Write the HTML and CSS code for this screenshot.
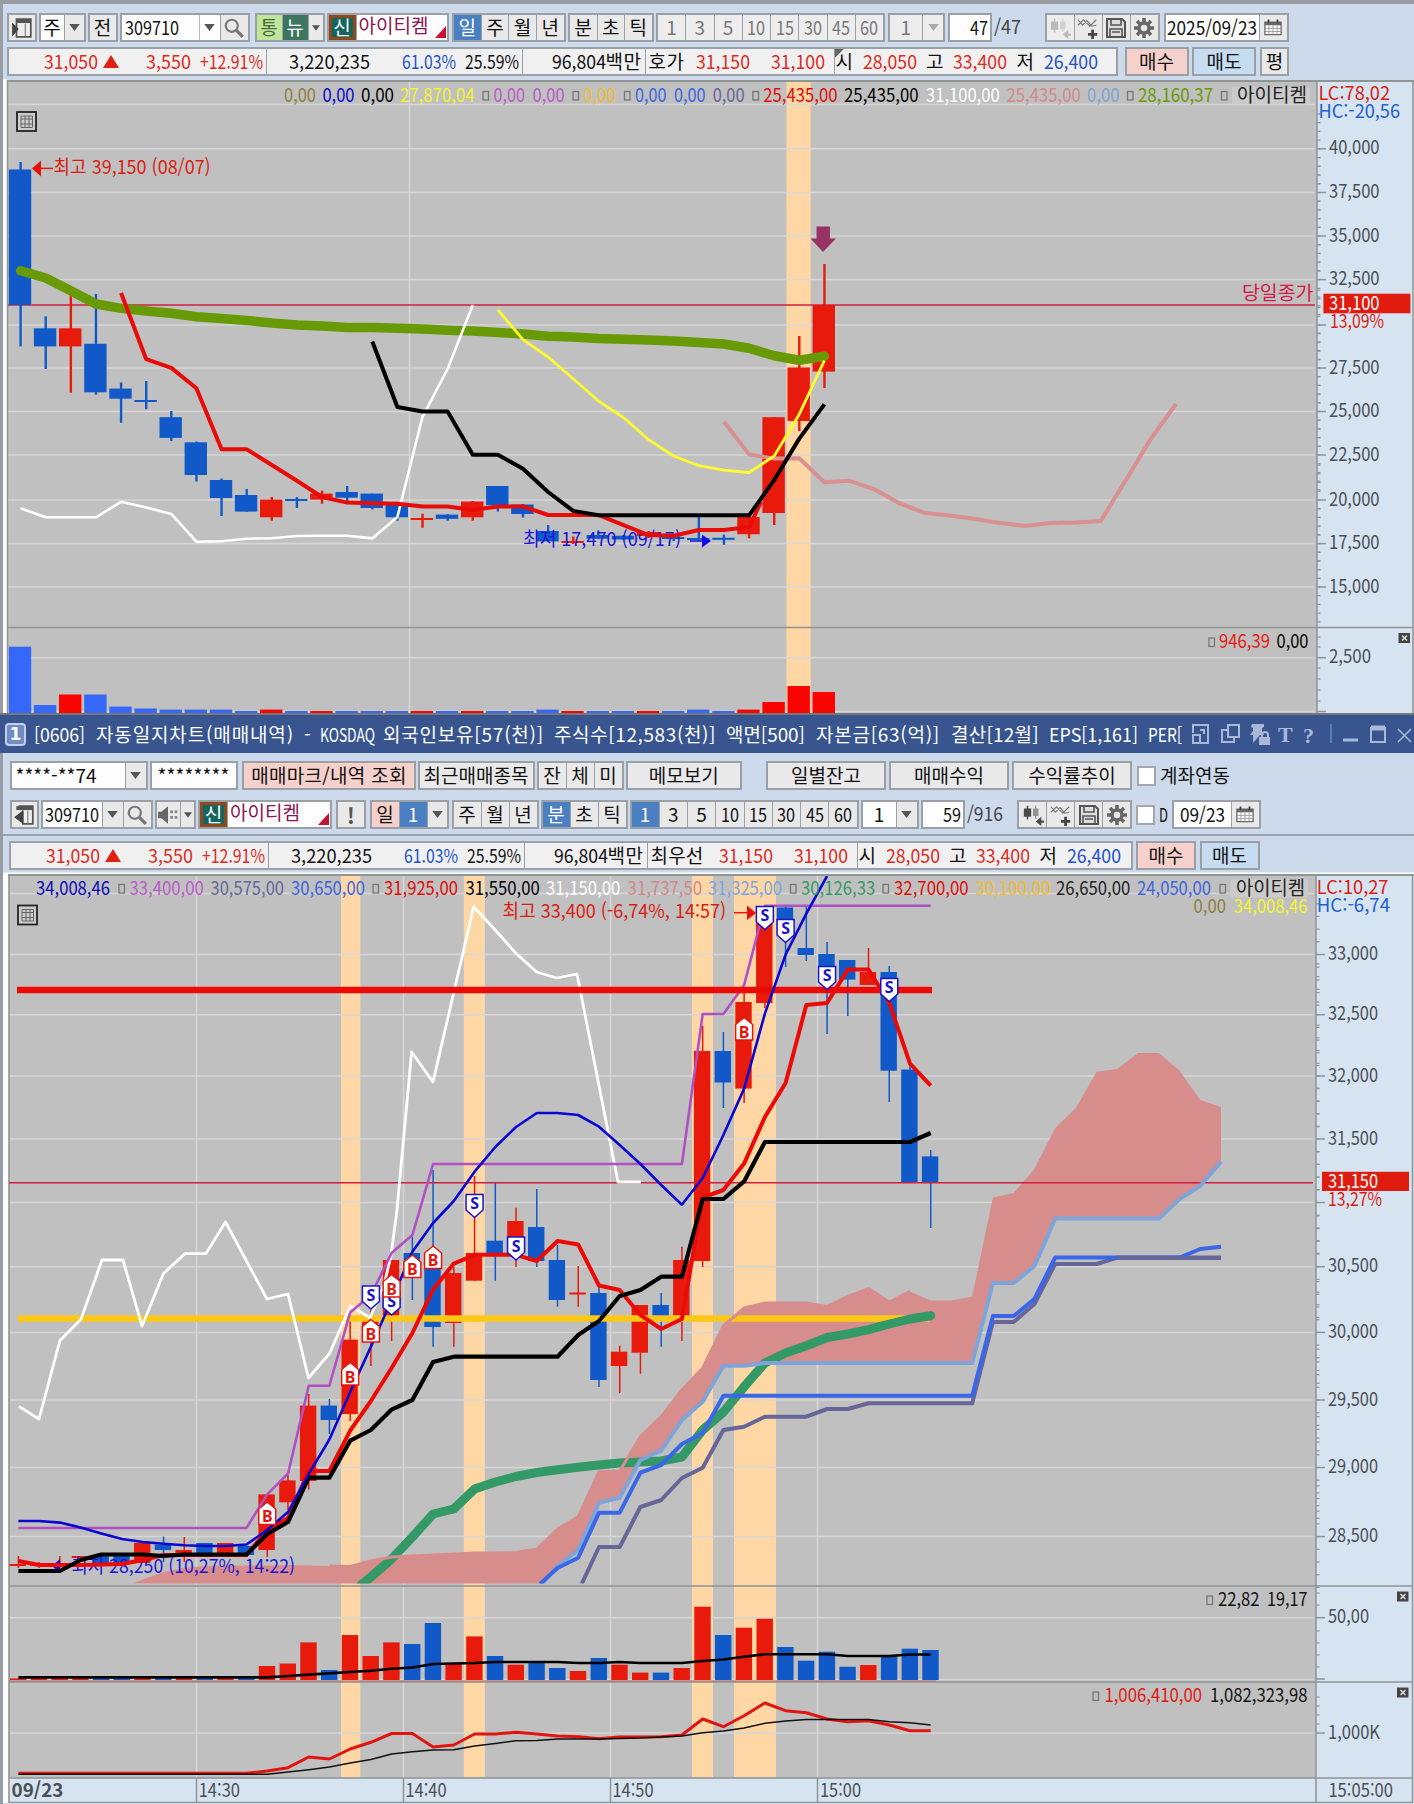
FILE: index.html
```html
<!DOCTYPE html>
<html lang="ko">
<head>
<meta charset="utf-8">
<title>자동일지차트</title>
<link rel="stylesheet" href="styles.css">
</head>
<body>
<svg class="defs" aria-hidden="true">
  <symbol id="i-panel" viewBox="0 0 20 20"><path d="M5 2h13v16H5z" fill="#eee" stroke="#555" stroke-width="1.6"/><path d="M5 2h13v3.500H5z" fill="#555"/><path d="M13 6v12" stroke="#777" fill="none"/><path d="M1 5l6 6-6 7z" fill="#444"/></symbol>
  <symbol id="i-panel-l" viewBox="0 0 20 20"><path d="M5 2h13v16H9V6" fill="#eee" stroke="#555" stroke-width="1.6"/><path d="M3 2h15v3.500H3z" fill="#555"/><path d="M13.500 6v12" stroke="#777" fill="none"/><path d="M9 6v12l-8-6z" fill="#444"/></symbol>
  <symbol id="i-search" viewBox="0 0 20 20"><circle cx="8" cy="8" r="5.500" fill="none" stroke="#777" stroke-width="2"/><path d="M12 12l6 6" stroke="#777" stroke-width="3"/></symbol>
  <symbol id="i-down" viewBox="0 0 12 8"><path d="M0 0h12l-6 8z" fill="currentColor"/></symbol>
  <symbol id="i-candle" viewBox="0 0 24 24"><path d="M2 5h8v9H2zM5.200 2h1.600v15H5.200z" fill="currentColor"/><path d="M12 5h6v8h-6zM14.300 2h1.400v14h-1.400z" fill="currentColor" opacity=".55"/><path d="M24 18h-3v-4l-6 5 6 5v-3.500h3z" fill="currentColor"/></symbol>
  <symbol id="i-wave" viewBox="0 0 24 24"><path d="M1 9l6-6 7 7 7-7M1 3l5 6 5-5 5 6 5-1" fill="none" stroke="#777" stroke-width="1.200"/><path d="M17 14v10M12 19h10" stroke="#444" stroke-width="3"/></symbol>
  <symbol id="i-save" viewBox="0 0 22 22"><path d="M2 2h15l3 3v15H2z" fill="#ddd" stroke="#555" stroke-width="2"/><path d="M6 2v6h10V2M5 20v-8h12v8M7 15h8" fill="none" stroke="#555" stroke-width="1.600"/></symbol>
  <symbol id="i-gear" viewBox="0 0 22 22"><circle cx="11" cy="11" r="5" fill="none" stroke="#666" stroke-width="3.500"/><g stroke="#666" stroke-width="3.500"><path d="M11 1v4M11 17v4M1 11h4M17 11h4M4 4l3 3M15 15l3 3M4 18l3-3M15 7l3-3"/></g></symbol>
  <symbol id="i-cal" viewBox="0 0 20 18"><path d="M1 3h18v14H1z" fill="#fff" stroke="#666" stroke-width="1.400"/><path d="M1 3h18v3.500H1z" fill="#666"/><path d="M5 0v4M15 0v4" stroke="#444" stroke-width="2"/><path d="M1 10h18M1 13.500h18M5.500 6v11M10 6v11M14.500 6v11" stroke="#999"/></symbol>
  <symbol id="i-speaker" viewBox="0 0 20 20"><path d="M1 7h3l6-5v16l-6-5H1z" fill="#666"/><path d="M12 6h2.500v2.500H12zM16 6h2.500v2.500H16zM12 11h2.500v2.500H12zM16 11h2.500v2.500H16z" fill="#888"/></symbol>
</svg>

<main class="screen">
  <section class="win win-a">
    <header class="bar bar-a">
      <div class="grp g-icon"><span class="c"><svg class="ic"><use href="#i-panel"/></svg></span></div>
      <div class="grp g-cycle"><span class="c w">주</span><span class="c dd"><svg class="dn"><use href="#i-down"/></svg></span></div>
      <div class="grp g-prev"><span class="c">전</span></div>
      <div class="grp g-code"><span class="c w txt"><span class="fit n6">309710</span></span><span class="c w dd"><svg class="dn"><use href="#i-down"/></svg></span><span class="c"><svg class="ic"><use href="#i-search"/></svg></span></div>
      <div class="grp g-news"><span class="c lime">통</span><span class="c nu">뉴</span><span class="c dd"><svg class="dn sm"><use href="#i-down"/></svg></span></div>
      <div class="grp g-name"><span class="c sin">신</span><span class="c w nm">아이티켐</span></div>
      <div class="grp g-four"><span class="c on">일</span><span class="c">주</span><span class="c">월</span><span class="c">년</span></div>
      <div class="grp g-three"><span class="c">분</span><span class="c">초</span><span class="c">틱</span></div>
      <div class="grp g-eight dim"><span class="c">1</span><span class="c">3</span><span class="c">5</span><span class="c"><span class="fit n2">10</span></span><span class="c"><span class="fit n2">15</span></span><span class="c"><span class="fit n2">30</span></span><span class="c"><span class="fit n2">45</span></span><span class="c"><span class="fit n2">60</span></span></div>
      <div class="grp g-one dim"><span class="c">1</span><span class="c dd"><svg class="dn"><use href="#i-down"/></svg></span></div>
      <div class="grp g-cnt"><span class="c w end"><span class="fit n2">47</span></span></div>
      <span class="total"><span class="fit n3">/47</span></span>
      <div class="grp g-tools"><span class="c faint"><svg class="ic"><use href="#i-candle"/></svg></span><span class="c"><svg class="ic"><use href="#i-wave"/></svg></span><span class="c"><svg class="ic"><use href="#i-save"/></svg></span><span class="c"><svg class="ic"><use href="#i-gear"/></svg></span></div>
      <div class="grp g-date"><span class="c w"><span class="fit n10">2025/09/23</span></span><span class="c"><svg class="ic cal"><use href="#i-cal"/></svg></span></div>
    </header>
    <div class="quote quote-a">
      <div class="strip">
        <div class="q q1"><b class="fit n6 red">31,050</b><i class="tri"></i><b class="fit n5 red">3,550</b><b class="fit n7 red">+12.91%</b></div>
        <div class="q q2"><b class="fit n9">3,220,235</b><b class="fit n6 blue">61.03%</b><b class="fit n6">25.59%</b></div>
        <div class="q q3"><b class="fit n6">96,804</b><b class="fit k2">백만</b></div>
        <div class="q q4"><b class="fit k2">호가</b><b class="fit n6 red">31,150</b><b class="fit n6 red">31,100</b></div>
        <div class="q q5 notch"><b class="k1">시</b><b class="fit n6 red">28,050</b><b class="k1">고</b><b class="fit n6 red">33,400</b><b class="k1">저</b><b class="fit n6 blue">26,400</b></div>
      </div>
      <button class="btn buy">매수</button><button class="btn sell">매도</button><button class="btn avg">평</button>
    </div>
    <svg id="daily" class="plot" viewBox="0 78 1414 637"></svg>
  </section>

  <section class="win win-b">
    <div class="title">
      <span class="num">1</span>
      <span class="fit t1">[0606]</span><span class="fit t2">자동일지차트(매매내역)</span><span class="fit t3">-</span><span class="fit t4">KOSDAQ</span><span class="fit t5">외국인보유[57(천)]</span><span class="fit t6">주식수[12,583(천)]</span><span class="fit t7">액면[500]</span><span class="fit t8">자본금[63(억)]</span><span class="fit t9">결산[12월]</span><span class="fit t10">EPS[1,161]</span><span class="fit t11">PER[</span>
      <svg class="winicons" viewBox="1184 715 230 38" width="230" height="38">
        <g fill="none" stroke="#a9b8d9" stroke-width="2">
          <path d="M1195 733v-8h15v18h-7M1195 735h7v8h-7zM1202 730h4v4"/>
          <path d="M1230 725h11v12h-11zM1229 730h-5v12h12v-4"/>
          <path d="M1333 724v19" stroke="#7087b8" stroke-width="1.500"/>
          <path d="M1373 728h14v14h-14z"/><path d="M1373 728h14" stroke-width="5"/>
          <path d="M1400 729l13 13M1413 729l-13 13" stroke-width="1.500"/>
          <path d="M1345 740h15" stroke-width="3"/>
          <path d="M1264 738v-3a3 3 0 0 1 6 0v3"/>
        </g>
        <path d="M1254 724h12v3l-2 1v4l2 3h-4l-7 8v-8h-3l3-4v-3l-2-1zM1261 737h11v8h-11z" fill="#a9b8d9"/>
        <text x="1280" y="742" class="serif">T</text><text x="1305" y="743" class="serif">?</text>
      </svg>
    </div>
    <div class="bar bar-b">
      <div class="grp h-acct"><span class="c w txt"><span class="fit n9">****-**74</span></span><span class="c dd"><svg class="dn"><use href="#i-down"/></svg></span></div>
      <div class="grp h-pass"><span class="c w"><span class="fit n8">********</span></span></div>
      <button class="btn h-mark">매매마크/내역 조회</button>
      <button class="btn h-recent">최근매매종목</button>
      <div class="grp h-three"><span class="c">잔</span><span class="c">체</span><span class="c">미</span></div>
      <button class="btn h-memo">메모보기</button>
      <button class="btn h-bal">일별잔고</button>
      <button class="btn h-bal">매매수익</button>
      <button class="btn h-bal">수익률추이</button>
      <i class="chk"></i><span class="lbl">계좌연동</span>
    </div>
    <div class="bar bar-c">
      <div class="grp g-icon"><span class="c"><svg class="ic"><use href="#i-panel-l"/></svg></span></div>
      <div class="grp j-code"><span class="c w"><span class="fit n6">309710</span></span><span class="c dd"><svg class="dn"><use href="#i-down"/></svg></span><span class="c"><svg class="ic"><use href="#i-search"/></svg></span></div>
      <div class="grp j-spk"><span class="c"><svg class="ic"><use href="#i-speaker"/></svg></span><span class="c dd"><svg class="dn sm"><use href="#i-down"/></svg></span></div>
      <div class="grp j-name"><span class="c sin">신</span><span class="c w nm">아이티켐</span></div>
      <div class="grp g-icon"><span class="c strong">!</span></div>
      <div class="grp j-day"><span class="c pink">일</span><span class="c on">1</span><span class="c dd"><svg class="dn"><use href="#i-down"/></svg></span></div>
      <div class="grp j-three"><span class="c">주</span><span class="c">월</span><span class="c">년</span></div>
      <div class="grp j-three"><span class="c on">분</span><span class="c">초</span><span class="c">틱</span></div>
      <div class="grp j-eight"><span class="c on">1</span><span class="c">3</span><span class="c">5</span><span class="c"><span class="fit n2">10</span></span><span class="c"><span class="fit n2">15</span></span><span class="c"><span class="fit n2">30</span></span><span class="c"><span class="fit n2">45</span></span><span class="c"><span class="fit n2">60</span></span></div>
      <div class="grp j-one"><span class="c w">1</span><span class="c dd"><svg class="dn"><use href="#i-down"/></svg></span></div>
      <div class="grp g-cnt"><span class="c w end"><span class="fit n2">59</span></span></div>
      <span class="total total-b"><span class="fit n4">/916</span></span>
      <div class="grp g-tools tools-b"><span class="c"><svg class="ic"><use href="#i-candle"/></svg></span><span class="c"><svg class="ic"><use href="#i-wave"/></svg></span><span class="c"><svg class="ic"><use href="#i-save"/></svg></span><span class="c"><svg class="ic"><use href="#i-gear"/></svg></span></div>
      <i class="chk"></i><span class="lbl d"><span class="fit n1">D</span></span>
      <div class="grp j-date"><span class="c w"><span class="fit n5">09/23</span></span><span class="c"><svg class="ic cal"><use href="#i-cal"/></svg></span></div>
    </div>
    <div class="quote quote-b">
      <div class="strip">
        <div class="q q1"><b class="fit n6 red">31,050</b><i class="tri"></i><b class="fit n5 red">3,550</b><b class="fit n7 red">+12.91%</b></div>
        <div class="q q2"><b class="fit n9">3,220,235</b><b class="fit n6 blue">61.03%</b><b class="fit n6">25.59%</b></div>
        <div class="q q3"><b class="fit n6">96,804</b><b class="fit k2">백만</b></div>
        <div class="q q4"><b class="fit k3">최우선</b><b class="fit n6 red">31,150</b><b class="fit n6 red">31,100</b></div>
        <div class="q q5"><b class="k1">시</b><b class="fit n6 red">28,050</b><b class="k1">고</b><b class="fit n6 red">33,400</b><b class="k1">저</b><b class="fit n6 blue">26,400</b></div>
      </div>
      <button class="btn buy">매수</button><button class="btn sell">매도</button>
    </div>
    <svg id="minute" class="plot" viewBox="0 870 1414 933"></svg>
  </section>
</main>
<script src="chart.js"></script>
</body>
</html>
```
FILE: styles.css
```css
* { box-sizing: border-box; }
body {
  margin: 0;
  background: #cddaeb;
  font-family: "Noto Sans CJK KR", "Liberation Sans", sans-serif;
  font-size: 19px;
  line-height: 26px;
  color: #111;
}
.defs { position: absolute; width: 0; height: 0; }
.screen { width: 1414px; height: 1804px; overflow: hidden; display: flex; flex-direction: column; }
.win { display: flex; flex-direction: column; border-left: 3px solid #989ca4; }
.win-a { height: 715px; border-top: 4px solid #989ca2; }
.win-b { height: 1089px; }
.bar { display: flex; height: 29px; }
.bar-a { margin: 9px 0 0 4px; width: 1300px; }
.bar-b { margin: 8px 0 0 6.5px; }
.bar-c { margin: 10px 0 0 6.5px; }

.grp { display: flex; border: 2px solid #9aa0a6; background: #e9e9ea; flex: none; }
.c { flex: 1 1 0; display: flex; align-items: center; justify-content: center; white-space: nowrap; min-width: 0; line-height: 22px; padding-bottom: 2px; }
.c + .c { border-left: 1.5px solid #9aa0a6; }
.w { background: #fdfdfe; }
.txt { justify-content: flex-start; padding-left: 4px; }
.end { justify-content: flex-end; padding-right: 2px; }
.on { background: #4a7fc2; color: #fff; }
.pink { background: #f6d0ca; }
.lime { background: #c0e69c; color: #4a6a3a; }
.nu { background: #3d7561; color: #fff; }
.sin { background: #136660; color: #fff; border: 3px solid #8a4a1c; flex: 0 0 27px; }
.nm { color: #8a1450; justify-content: flex-start; padding-left: 2px; padding-bottom: 6px; position: relative; }
.nm::after { content: ""; position: absolute; right: 1px; bottom: 2px; border-left: 11px solid transparent; border-bottom: 12px solid #cc0f2f; }
.dim { color: #777; background: #ededee; }
.dim .dn { color: #aaa; }
.faint { color: #bbb; background: #ededee; }
.strong { font-weight: bold; color: #555; font-size: 22px; }
.ic { width: 22px; height: 22px; color: #4a4a4a; margin-top: 2px; }
.faint .ic { color: #bbb; }
.cal { width: 18px; height: 17px; }
.dn { width: 11px; height: 7px; color: #555; margin-top: 2px; }
.sm { width: 8px; height: 6px; }

.g-icon { width: 29.5px; margin-right: 2px; }
.g-cycle { width: 47px; margin-right: 2px; }
.g-cycle .dd { flex: 0 0 20px; }
.g-prev { width: 30px; margin-right: 2px; }
.g-code { width: 130px; margin-right: 5px; }
.g-code .c + .c { flex: 0 0 21px; }
.g-code .c:last-child { flex-basis: 28px; }
.g-code .txt { padding-left: 3px; }
.g-code .dd { border-left: 1.5px solid #bbb; }
.g-news { width: 70px; margin-right: 2px; }
.g-news .dd { flex: 0 0 15px; }
.g-name { width: 122px; margin-right: 3.5px; }
.g-four { width: 113.5px; margin-right: 2.5px; }
.g-three { width: 85.5px; margin-right: 2.5px; }
.g-eight { width: 229px; margin-right: 2.5px; }
.g-one { width: 57.5px; margin-right: 2.5px; }
.g-one .dd { flex: 0 0 21px; }
.g-cnt { width: 44px; }
.total { width: 53px; padding: 0 0 0 2px; color: #444; }
.g-tools { width: 115px; margin-right: 4px; }
.g-date { width: 125px; }
.g-date .c:last-child { flex: 0 0 28px; }

.h-acct { width: 138px; margin-right: 2px; }
.h-acct .dd { flex: 0 0 21px; }
.h-pass { width: 88px; margin-right: 4.5px; }
.h-three { width: 87px; margin-right: 2px; }
.j-code { width: 111.5px; margin-right: 2px; }
.j-code .c + .c { flex: 0 0 21px; }
.j-code .c:last-child { flex-basis: 28px; }
.j-spk { width: 41.5px; margin-right: 2px; }
.j-spk .dd { flex: 0 0 14px; }
.j-name { width: 134px; margin-right: 4px; }
.j-day { width: 79px; margin: 0 3px 0 2px; }
.j-day .dd { flex: 0 0 20px; }
.j-three { width: 87px; margin-right: 2px; }
.j-eight { width: 229px; margin-right: 2px; }
.j-one { width: 58px; margin-right: 2px; }
.j-one .dd { flex: 0 0 21px; }
.total-b { width: 52.5px; }
.tools-b { margin-right: 4px; }
.j-date { width: 88.5px; }
.j-date .c:last-child { flex: 0 0 28px; }

.chk { flex: none; width: 19px; height: 20px; margin: 5px 4px 0 0; background: #fff; border: 2px solid #a4a8ae; }
.lbl { padding-top: 1px; }
.lbl.d { width: 12px; margin-right: 1px; }
.btn { flex: none; height: 29px; margin: 0; padding: 0 0 2px; border: 2px solid #9aa0a6; background: #e9e9ea; font: inherit; line-height: 23px; color: #111; white-space: nowrap; }
.h-mark { width: 174px; margin-right: 1.5px; background: #f6d0ca; letter-spacing: .3px; }
.h-recent { width: 117px; margin-right: 2px; }
.h-memo { width: 116.5px; margin-right: 24px; }
.h-bal { width: 120px; margin-right: 3px; }
.h-bal + .chk { margin-left: 2px; }

.quote { display: flex; height: 29px; }
.quote-a { margin: 5px 0 0 4px; }
.quote-b { margin: 5px 0 0 0; border-top: 2px solid #98a3b0; height: 36px; padding: 5px 0 0 6px; }
.strip { display: flex; height: 29px; width: 1111px; border: 2px solid #9aa0a6; background: #f0f0f1; margin-right: 6.5px; }
.quote-b .strip { width: 1123.5px; margin-right: 3.500px; }
.q { display: flex; align-items: center; justify-content: flex-end; flex: none; white-space: nowrap; line-height: 23px; padding-bottom: 2px; }
.q + .q { border-left: 1.500px solid #9aa0a6; }
.q b { font-weight: normal; flex: none; }
.q1 { width: 256.5px; padding-right: 3px; }
.q2 { width: 256.5px; padding-right: 3px; gap: 9px; }
.q3 { width: 122.5px; padding-right: 3px; }
.q4 { width: 189px; padding-right: 9px; gap: 21px; }
.quote-b .q4 { width: 210px; }
.quote-a .k2 { margin-right: 0; }
.quote-a .q4 .k2 { margin-right: -10px; }
.quote-b .k3 { margin-right: -6px; }
.q5 { padding-left: 1px; gap: 9.5px; justify-content: flex-start; }
.notch { background: linear-gradient(135deg, #666 6px, transparent 6.5px); }
.n1 { width: 9px; }
.n2 { width: 18px; }
.n3 { width: 27px; }
.n4 { width: 36px; }
.n5 { width: 45px; }
.n6 { width: 54px; }
.n7 { width: 63px; }
.n8 { width: 72px; }
.n9 { width: 81px; }
.n10 { width: 90px; }
.q .n5 { margin-right: 9px; }
.q .n9 { margin-right: 23px; }
.k1 { width: 17.500px; }
.k2 { width: 36px; }
.k3 { width: 53px; }
.tri { border: 8px solid transparent; border-top: 0; border-bottom: 13px solid #e02010; margin: 1px 27px 0 5px; }
.red { color: #dc2a1c; }
.blue { color: #2450cc; }
.buy { width: 64px; margin-right: 3.500px; background: #f6d0ca; }
.sell { width: 64px; margin-right: 4px; background: #c5dcf1; }
.avg { width: 29px; }
.quote-b .buy, .quote-b .sell { width: 60px; }

.title { height: 38px; background: #38558f; color: #fff; display: flex; align-items: center; margin-left: -3px; padding-left: 5px; white-space: nowrap; }
.num { width: 21px; height: 23px; border: 2px solid #c3cfe8; border-radius: 4px; background: #6f8cc4; font: bold 17px/19px "DejaVu Sans", sans-serif; text-align: center; margin-right: 8px; }
.t1 { width: 51px; margin-right: 11px; }
.t2 { width: 198px; margin-right: 10px; }
.t3 { width: 7px; margin-right: 9px; }
.t4 { width: 55px; margin-right: 8px; }
.t5 { width: 161px; margin-right: 10px; }
.t6 { width: 162px; margin-right: 10px; }
.t7 { width: 79px; margin-right: 11px; }
.t8 { width: 124px; margin-right: 11px; }
.t9 { width: 88px; margin-right: 10px; }
.t10 { width: 89px; margin-right: 10px; }
.t11 { width: 34px; }
.fit { display: block; overflow: visible; flex: none; transform-origin: 0 50%; }
.winicons { flex: none; }
.serif { font: bold 22px "Liberation Serif", serif; fill: #a9b8d9; }

.plot { display: block; flex: none; margin-left: -3px; width: 1414px; }
#daily { height: 637px; margin-top: 2px; }
#minute { height: 933px; }
.plot text { font-size: 19px; }
.plot .mark { font: bold 16px "Noto Sans", sans-serif; }
```
FILE: chart.js
```js
// Spread or condense text to the width of its cell, as a fixed-pitch terminal font does.
document.querySelectorAll('.fit').forEach(el => {
  const range = document.createRange();
  range.selectNodeContents(el);
  const natural = range.getBoundingClientRect().width;
  const room = el.clientWidth;
  if (natural > room) el.style.transform = `scaleX(${(room / natural).toFixed(4)})`;
  else el.style.letterSpacing = ((room - natural) / el.textContent.length).toFixed(2) + 'px';
});

const RED = '#e81a0c', BLUE = '#1159c8', GRID = '#d6d6d6', EDGE = '#8f9494';

function painter(id) {
  const out = [];
  const p = {
    raw: s => out.push(s),
    rect: (x, y, x2, y2, f, extra = '') => out.push(`<rect x="${x}" y="${y}" width="${(x2 - x).toFixed(1)}" height="${(y2 - y).toFixed(1)}" fill="${f}" ${extra}/>`),
    line: (x, y, x2, y2, c, w = 1.5) => out.push(`<path d="M${x} ${y}L${x2} ${y2}" stroke="${c}" stroke-width="${w}"/>`),
    text: (x, y, x2, s, c, extra = '') => out.push(`<text x="${x}" y="${y}" fill="${c}" textLength="${(x2 - x).toFixed(1)}" lengthAdjust="spacingAndGlyphs" ${extra}>${s}</text>`),
    poly: (pts, c, w, cap = 'butt') => out.push(`<path d="M${pts.map(q => q.map(v => v.toFixed(1)).join(' ')).join('L')}" fill="none" stroke="${c}" stroke-width="${w}" stroke-linejoin="round" stroke-linecap="${cap}"/>`),
    square: (x, y) => out.push(`<rect x="${x}" y="${y - 10}" width="5.5" height="8.5" fill="none" stroke="#777" stroke-width="1.3"/>`),
    close: (x, y) => out.push(`<rect x="${x}" y="${y}" width="11.500" height="10" fill="#444"/><path d="M${x + 3.5} ${y + 2.5}l5 5M${x + 8.5} ${y + 2.5}l-5 5" stroke="#ddd" stroke-width="1.5"/>`),
    table: (x, y) => out.push(`<rect x="${x}" y="${y}" width="19" height="19" fill="#ccc" stroke="#222" stroke-width="1.8"/><path d="M${x + 4} ${y + 4}h11.500v11.500h-11.500zM${x + 4} ${y + 7}h11.500M${x + 4} ${y + 12}h11.500M${x + 8} ${y + 4}v11.500M${x + 12} ${y + 4}v11.500" fill="none" stroke="#666"/>`),
    flush: () => { document.getElementById(id).innerHTML = out.join(''); }
  };
  return p;
}
const series = (x, start, ys) => ys.map((y, k) => [x(start + k), y]);
const rep = (v, n) => Array(n).fill(v);
function candles(p, x, half, rows, wick) {
  rows.forEach(([i, top, bot, hi, lo, c]) => {
    const col = c === 'R' ? RED : BLUE, cx = x(i);
    p.line(cx, hi, cx, lo, col, wick);
    p.rect((cx - half - .6).toFixed(1), top, cx + half - .6, Math.max(bot, top + 2), col);
  });
}

/* ---------- daily chart ---------- */
(function () {
  const p = painter('daily'), x = i => 20.6 + 25.12 * i;
  p.rect(0, 78, 1414, 715, '#cddaeb');
  p.rect(0, 78, 3, 715, '#989ca4');
  p.rect(3, 79, 7, 715, '#fdfdfd');
  p.rect(7, 80.5, 1414, 715, '#c0c0c0');
  p.rect(1317, 82, 1414, 715, '#d6e3f1');
  p.rect(786.5, 82, 810.7, 713, '#ffd7a4');
  const grid = [148.8, 192.5, 236, 279.6, 325, 368, 411.5, 455, 500, 543.6, 587];
  [104.5, ...grid, 657.7, 711.5].forEach(y => p.line(8, y, 1315, y, GRID));
  p.line(409.5, 82, 409.5, 713, GRID);
  p.line(7, 81, 1414, 81, EDGE, 2);
  p.line(7.5, 80, 7.5, 715, EDGE);
  p.line(7, 627.5, 1413, 627.5, EDGE);
  p.line(1317, 81, 1317, 715, EDGE);
  p.line(1413, 81, 1413, 715, EDGE);
  p.line(0, 714, 1414, 714, '#777', 2);

  ['40,000', '37,500', '35,000', '32,500', '', '27,500', '25,000', '22,500', '20,000', '17,500', '15,000'].forEach((s, k) => {
    const y = grid[k];
    p.line(1317, y, 1326, y, EDGE);
    for (let m = -4; m < 5; m++) p.line(1317, y + m * 8.72, 1320.5, y + m * 8.72, EDGE, 1.2);
    if (s) p.text(1329, y + 5.5, 1379.5, s, '#4a4e52');
  });
  [637, 647, 668, 679, 690, 701].forEach(y => p.line(1317, y, 1320.5, y, EDGE, 1.2));
  p.line(1317, 657.7, 1326, 657.7, EDGE);
  p.line(1317, 711.5, 1326, 711.5, EDGE);
  p.text(1329, 662.5, 1371, '2,500', '#4a4e52');
  p.close(1398.5, 633);

  p.line(8, 305, 1315, 305, '#d01f3f', 1.6);
  p.text(1242, 300, 1313.5, '당일종가', '#d81848');

  candles(p, x, 11.2, [
    [0, 169.5, 305, 162, 346.4, 'B'], [1, 328.3, 346.4, 316.3, 369, 'B'], [2, 328.3, 346.4, 295.6, 392.7, 'R'],
    [3, 343.8, 392.3, 294, 394.6, 'B'], [4, 388.6, 398.7, 382.5, 422.8, 'B'], [5, 400, 402, 381, 409.3, 'B'],
    [6, 417.2, 437.9, 411, 441, 'B'], [7, 442.3, 475, 441.5, 481.5, 'B'], [8, 480, 498, 478.5, 516, 'B'],
    [9, 495, 511.6, 489, 511.6, 'B'], [10, 499.6, 517.3, 497, 520.7, 'R'], [11, 499, 501, 497, 508, 'B'],
    [12, 493.6, 499.6, 490.5, 503.7, 'R'], [13, 492, 497.7, 486, 501, 'B'], [14, 493.6, 508, 493.6, 509.4, 'B'],
    [15, 503.7, 517.3, 503, 520.7, 'B'], [16, 518, 520, 513.8, 527.8, 'R'], [17, 514.6, 518.8, 514, 520.7, 'B'],
    [18, 501.5, 517.3, 501, 520.7, 'R'], [19, 486, 505.2, 486, 511.5, 'B'], [20, 504.5, 514, 504, 517.6, 'B'],
    [21, 531, 541.4, 525, 541.4, 'B'], [22, 541, 543, 536.5, 544, 'R'], [23, 535, 538.7, 530.5, 539, 'B'],
    [24, 535.7, 539.5, 535, 540, 'B'], [25, 532, 536, 531, 538, 'R'], [26, 537, 539, 534, 541, 'B'],
    [27, 538, 540, 516, 541, 'B'], [28, 537.8, 539.8, 534.6, 544.8, 'B'], [29, 517, 534.2, 517, 538.4, 'R'],
    [30, 417.2, 513, 417.2, 525, 'R'], [31, 367.5, 421, 336, 431, 'R'], [32, 305, 371.6, 264, 388, 'R']
  ], 2.4);

  const vol = [646.7, 705, 694.5, 694.5, 706.6, 708.5, 709.6, 709.6, 709.6, 711, 709.6, 711, 711, 711, 711, 711, 711, 711, 711, 711, 711, 709.6, 711, 711, 711, 711, 711, 709.6, 711, 709.6, 702, 686, 692];
  const up = [2, 10, 12, 16, 18, 22, 25, 29, 30, 31, 32];
  vol.forEach((y, i) => p.rect((x(i) - 11.8).toFixed(1), y, x(i) + 10.6, 713, up.includes(i) ? '#f90400' : '#3568f8'));

  p.text(523, 546, 681, '최저 17,470 (09/17)', '#1a14d8');
  p.line(690, 541, 704, 541, '#1a14d8');
  p.raw('<path d="M702 534.500l9 6.500-9 6.500z" fill="#1408f0"/>');
  p.text(53.6, 174, 210.7, '최고 39,150 (08/07)', '#dc1c10');
  p.line(40, 168.4, 53, 168.4, RED);
  p.raw('<path d="M41 160.500v16l-9-8z" fill="#e8100c"/>');

  p.poly(series(x, 0, [270.8, 278, 290.7, 304, 308.4, 311, 313.3, 316.7, 318.6, 320.4, 323, 325, 326, 327.6, 327.6, 328.3, 329, 330.2, 331, 332.5, 334, 336.2, 337, 338.5, 339.3, 340, 341, 342.6, 344, 348.3, 355.8, 360.3, 356.2]), '#679a04', 9.5, 'round');
  p.poly(series(x, 0, [508.2, 517.3, 517.3, 517.3, 501.8, 507.5, 513.9, 541.7, 541.2, 538.7, 538.2, 536, 535.7, 535.7, 538.4, 517, 416.8, 369, 305]), '#fff', 2.6);
  p.poly([...series(x, 4, [293, 359.2, 367.9, 388.2, 449.2, 449.2, 465, 480.8, 497, 502.6, 503.3, 503.7, 506.4, 506.4, 510, 506.4, 506.4, 515, 515, 515, 525.2, 535, 535.7, 530, 530, 527]), [761, 502]], '#e80c08', 4);
  p.poly(series(x, 28, [421.7, 454.4, 458.6, 458.2, 482.3, 480.8, 489.4, 503.4, 513, 515.4, 519, 523, 526, 523, 522.5, 521, 480, 438.6, 404]), '#d89090', 4);
  p.poly(series(x, 14, [341.5, 407, 411.5, 411.5, 454.8, 454.8, 468.7, 492, 510.9, ...rep(515.3, 7), 480, 438.6, 404.4]), '#000', 4);
  p.poly(series(x, 19, [310, 339.6, 357, 378.8, 401, 417.5, 439.7, 456, 465.7, 470.2, 472.5, 456, 414.2, 360.7]), '#fdfb30', 2.8);
  p.raw('<path d="M816.500 226.500h13.500v12h6L823 252l-12.500-13.500h6z" fill="#993366"/>');

  [['0,00', 284, 316, '#8f7f3f'], ['0,00', 322.4, 354.5, '#0808c8'], ['0,00', 361, 394, '#000'], ['27,870,04', 400, 474.5, '#f4f430'],
   ['0,00', 493.5, 525, '#b85cc8'], ['0,00', 532.5, 564.6, '#b85cc8'], ['0,00', 583, 616, '#f0bc30'], ['0,00', 635, 666.5, '#3c64e0'],
   ['0,00', 674, 705.5, '#3c64e0'], ['0,00', 712.7, 744.6, '#66669a'], ['25,435,00', 763.3, 837.5, '#e00c08'], ['25,435,00', 844, 918.6, '#000'],
   ['31,100,00', 926, 999.6, '#fff'], ['25,435,00', 1006.5, 1080.7, '#d48888'], ['0,00', 1087, 1119.4, '#7fa4d8'], ['28,160,37', 1138, 1213, '#679a04']
  ].forEach(([s, a, b, c]) => p.text(a, 101.5, b, s, c));
  [483, 573, 624.5, 753, 1127.5, 1221.5].forEach(a => p.square(a, 101.5));
  p.rect(1232, 87, 1310, 104.5, '#cbcbcb');
  p.text(1237, 101.5, 1307, '아이티켐', '#222');
  p.text(1318.5, 100, 1390, 'LC:78,02', '#dc1c10');
  p.text(1318.5, 118, 1400, 'HC:-20,56', '#2060d0');
  p.table(17, 112);
  p.square(1209, 648);
  p.text(1219, 648, 1270, '946,39', '#e81810');
  p.text(1276.5, 648, 1308.5, '0,00', '#000');
  p.rect(1323.4, 293.7, 1410.4, 313.3, '#e01c10');
  p.text(1329, 310, 1379.5, '31,100', '#fff');
  p.text(1330, 328, 1384, '13,09%', '#dc1c10');
  p.flush();
})();

/* ---------- minute chart ---------- */
(function () {
  const p = painter('minute'), x = i => 18.4 + 20.735 * i;
  p.rect(0, 870, 1414, 1804, '#cddaeb');
  p.rect(0, 870, 3, 1804, '#989ca4');
  p.rect(3, 872.5, 1414, 1804, '#fdfdfd');
  p.rect(8.5, 874, 1414, 1804, '#c0c0c0');
  p.rect(1316, 876, 1414, 1804, '#d6e3f1');
  p.rect(9, 1778, 1414, 1804, '#d6e3f1');
  [[341, 360.3], [463.8, 484.8], [692, 713], [734, 776]].forEach(([a, b]) => p.rect(a, 876, b, 1777, '#ffd7a4'));
  const grid = [954.5, 1014.7, 1076, 1139, 1202.5, 1266.7, 1332.4, 1400, 1467.5, 1536.6];
  [893.5, ...grid, 1617.7, 1679.5, 1733].forEach(y => p.line(9, y, 1314, y, GRID));
  [196.5, 403.5, 610.5, 817.5].forEach(v => { p.line(v, 876, v, 1777, GRID); p.line(v, 1778, v, 1803, EDGE); });
  p.line(8, 875, 1414, 875, EDGE, 2);
  p.line(9, 874, 9, 1804, EDGE);
  [1586, 1682, 1778, 1802.5].forEach(y => p.line(9, y, 1413, y, EDGE));
  p.line(1316, 875, 1316, 1804, EDGE);
  p.line(1412.5, 875, 1412.5, 1804, EDGE);

  ['33,000', '32,500', '32,000', '31,500', '', '30,500', '30,000', '29,500', '29,000', '28,500'].forEach((s, k) => {
    const y = grid[k];
    p.line(1316, y, 1325, y, EDGE);
    for (let m = -4; m < 5; m++) p.line(1316, y + m * 12.7, 1319.5, y + m * 12.7, EDGE, 1.2);
    if (s) p.text(1328, y + 5.5, 1378, s, '#4a4e52');
  });
  [1593, 1605, 1631, 1643, 1655, 1667, 1697, 1706, 1715, 1724].forEach(y => p.line(1316, y, 1319.5, y, EDGE, 1.2));
  [1617.7, 1679, 1733].forEach(y => p.line(1316, y, 1325, y, EDGE));
  p.text(1328, 1623, 1369, '50,00', '#4a4e52');
  p.text(1328, 1738.500, 1380, '1,000K', '#4a4e52');
  p.close(1397, 1591.500);
  p.close(1397, 1687.500);

  p.raw('<clipPath id="clip"><rect x="9" y="876" width="1306" height="707.500"/></clipPath><g clip-path="url(#clip)">');
  candles(p, x, 8.2, [
    [0, 1564, 1566, 1556, 1568, 'R'], [1, 1564, 1566, 1562, 1568, 'R'], [2, 1564, 1566, 1556, 1568, 'R'], [3, 1556, 1558, 1556, 1558, 'R'],
    [4, 1556, 1564, 1556, 1564, 'B'], [5, 1554, 1564, 1554, 1564, 'B'], [6, 1543, 1563, 1543, 1563, 'R'], [7, 1544.5, 1550, 1536.5, 1562, 'B'],
    [8, 1550, 1556, 1537, 1562, 'R'], [9, 1543, 1556, 1543, 1556, 'B'], [10, 1543, 1555, 1543, 1555, 'R'], [11, 1546, 1555, 1546, 1555, 'B'],
    [12, 1494.4, 1550, 1494, 1557, 'R'], [13, 1480.4, 1502.3, 1475, 1510, 'R'], [14, 1405.6, 1481, 1394, 1489.6, 'R'], [15, 1405.6, 1420, 1399, 1434, 'B'],
    [16, 1339.6, 1414, 1320, 1421, 'R'], [17, 1320, 1340, 1310, 1366, 'R'], [18, 1260, 1316, 1260, 1341, 'R'], [19, 1253, 1264, 1237, 1300, 'B'],
    [20, 1265, 1327, 1170, 1346.7, 'B'], [21, 1273, 1323, 1267, 1346.7, 'R'], [22, 1253, 1280.7, 1176, 1280.7, 'R'], [23, 1240.7, 1255, 1182.7, 1280.7, 'B'],
    [24, 1221, 1245, 1207.7, 1267, 'R'], [25, 1227, 1261, 1189, 1267, 'B'], [26, 1260, 1300, 1245, 1306.7, 'B'], [27, 1292.5, 1294.5, 1266, 1306.7, 'R'],
    [28, 1293, 1380, 1285, 1387, 'B'], [29, 1351.7, 1366, 1345.7, 1393, 'R'], [30, 1305, 1352.7, 1305, 1373.7, 'R'], [31, 1305, 1320, 1293, 1346.7, 'B'],
    [32, 1260, 1320, 1246.7, 1341, 'R'], [33, 1051, 1261, 1026, 1267, 'R'], [34, 1051, 1082.5, 1032, 1108, 'B'], [35, 1002, 1088.6, 992, 1103, 'R'],
    [36, 912, 1003, 912, 1008, 'R'], [37, 907.5, 928, 907, 967, 'B'], [38, 948, 955, 906, 961, 'B'], [39, 954, 967, 942, 1034, 'B'],
    [40, 960, 979.6, 960, 1016, 'B'], [41, 972, 985, 948, 985, 'R'], [42, 972, 1070.7, 966, 1102, 'B'], [43, 1069.6, 1182.5, 1062, 1182.5, 'B'],
    [44, 1156.4, 1182.5, 1150, 1228, 'B']
  ], 1.5);

  const lead = [[131.7, 1583.5], ...series(x, 7, [1572, 1568, 1566, 1565.5, 1565.5, 1565.5, 1565, 1565.5, 1566, 1566.5, 1561, 1557, 1556, 1555, 1554, 1553, 1553, 1552.5, 1549, 1529, 1516.7, 1471.7, 1471, 1436.7, 1416.7, 1390, 1368, 1326, 1308, 1303, 1303, 1303, 1306.4, 1296.4, 1288.6, 1302, 1291.4, 1300.4, 1300.4, 1296.4, 1197.5, 1193, 1169, 1128, 1108, 1071.8, 1069, 1053, 1053, 1070.7, 1100, 1107])];
  const lag = series(x, 25, [1590, 1566, 1550, 1502.7, 1497.7, 1460, 1450.7, 1420, 1401.7, 1365.7, 1365.7, ...rep(1363, 11), 1283, 1283, 1266, ...rep(1218.6, 6), 1199, 1185.7, 1161.8]);
  p.raw(`<path fill="#d88d8d" d="M${[...lead, ...lag.slice().reverse()].map(q => q[0].toFixed(1) + ' ' + q[1]).join('L')}Z"/>`);
  p.line(9, 1182.7, 1313, 1182.7, '#d01f3f', 1.6);
  p.text(71.5, 1573, 295, '최저 28,250 (10,27%, 14:22)', '#1a14d8');
  p.raw('<path d="M60 1559v14l-8-7z" fill="#1408f0"/>');

  p.poly([[18, 1318.5], [930, 1318.5]], '#fbc818', 6.5);
  p.poly([[361, 1585], ...series(x, 17, [1577, 1559, 1537, 1514, 1509, 1489, 1482, 1476.5, 1472.5, 1469.7, 1467.3, 1465, 1463, 1462, 1461, 1457, 1430, 1412, 1386.8, 1363, 1353, 1345.7, 1337.5, 1334, 1329.6, 1324, 1319, 1315.7])], '#339966', 9, 'round');
  p.poly(lead.slice(9, 38), '#d88d8d', 3);
  p.poly(lag, '#7fa4d8', 4);
  p.poly([[581.7, 1584], ...series(x, 28, [1547, 1547, 1507, 1500, 1478, 1467.7, 1430, 1426.7, 1416.7, 1416.7, 1416.7, 1409, 1409, ...rep(1403.3, 6), 1322, 1322, 1304, 1264, 1264, 1264, ...rep(1257.5, 6)])], '#666699', 4);
  p.poly([[540, 1584], ...series(x, 26, [1568, 1557.7, 1512.7, 1512.7, 1472.7, 1465, 1444, 1433, ...rep(1395.7, 13), 1316, 1316, 1299, ...rep(1257.5, 7), 1249, 1246.8])], '#3a66e8', 4);
  p.poly([...series(x, 53, rep(1258, 6))], '#666699', 4);
  p.poly([[19, 1406.5], [39, 1419], [60, 1340.4], [81, 1319.3], [102, 1260], [123, 1260], [142, 1326], [163.5, 1273.5], [185, 1253.6], [206, 1253.6], [225.5, 1222], [246.5, 1261], [267, 1299], [288, 1294], [308.5, 1378], [329.5, 1353.5], [350.4, 1306], [370, 1317.7], [384, 1285], [391, 1255.6], [397, 1210], [411.6, 1052], [433, 1082], [473.7, 906.7], [498, 933], [515.6, 953], [536.6, 972], [556.7, 978], [577, 974], [618, 1182], [641, 1182]], '#fff', 2.8);
  p.poly(series(x, 0, [...rep(1528, 12), 1494.4, 1473.7, 1385.7, 1385.7, 1312.5, 1295, 1253, 1235, ...rep(1164, 13), 1014, 1014, 985, ...rep(905.7, 9)]), '#b050c4', 2.6);
  p.line(17, 990, 932, 990, '#ec0a06', 6.5);
  p.poly(series(x, 0, [1561, 1565, 1565, 1565, 1564.4, 1564, 1560, 1555, ...rep(1555, 4), 1530, 1518, 1471, 1471, 1430.7, 1401, 1368, 1333, 1289.4, 1263.6, 1254.8, 1254.8, 1254.8, 1261, 1241, 1244.5, 1285.5, 1290, 1315, 1329, 1319, 1197.5, 1190, 1163.6, 1117, 1083, 1005, 1003, 969.6, 969.6, 1003, 1063.6, 1085.7]), '#ec0a06', 4);
  p.poly(series(x, 0, [1571, 1571, 1571, 1560, 1554.5, 1554.5, 1554.5, 1556, 1554.5, 1554.5, 1554.5, 1554.5, 1534, 1522, 1477.7, 1477.7, 1440.6, 1430, 1409.6, 1400, 1362, ...rep(1356.7, 6), 1335, 1321, 1296, 1290, 1276.7, 1276.7, 1199, 1199, 1181.4, ...rep(1142, 8), 1133]), '#000', 4.2);
  p.poly(series(x, 0, [1521, 1521, 1522.6, 1527.4, 1533.4, 1539, 1542, 1543.7, 1545.3, 1546, 1546, 1544.5, 1530, 1512, 1474, 1439.5, 1392, 1346.7, 1300, 1251.7, 1223, 1201, 1171.7, 1147, 1127, 1113, 1113, 1115, 1126.7, 1145, 1164, 1185, 1204.7, 1178, 1135, 1088.6, 1013.6, 954.6, 913.6, 876]), '#0a08d0', 2.6);

  const mark = (i, top, kind) => {
    const cx = x(i), buy = kind === 'B', col = buy ? '#e01810' : '#1a14c8';
    const d = buy ? `M${cx} ${top}l8.500 7v15.500h-17v-15.500z` : `M${cx - 8.5} ${top}h17v15.500l-8.500 7.500-8.500-7.500z`;
    p.raw(`<path d="${d}" fill="#fff" stroke="${col}" stroke-width="1.5"/><text class="mark" x="${cx}" y="${top + (buy ? 20 : 14.5)}" text-anchor="middle" fill="${col}">${kind}</text>`);
  };
  [[17, 1286, 'S'], [18, 1292, 'S'], [22, 1194.5, 'S'], [24, 1237, 'S'], [36, 906.5, 'S'], [37, 919.5, 'S'], [39, 966.5, 'S'], [42, 978.5, 'S'],
   [12, 1502, 'B'], [16, 1362.5, 'B'], [17, 1319.5, 'B'], [18, 1274.5, 'B'], [19, 1255, 'B'], [20, 1246, 'B'], [35, 1017.5, 'B']].forEach(m => mark(...m));
  p.raw('</g>');

  const vol = [...rep(1678.4, 12), 1666, 1663.5, 1642.4, 1670, 1635, 1656, 1642.4, 1644, 1623, 1663.5, 1636.4, 1656, 1664.7, 1663, 1668, 1671, 1658, 1664.7, 1672.6, 1672.6, 1668, 1606.7, 1635, 1627.7, 1618.7, 1647, 1660.7, 1651.7, 1666.7, 1665, 1656, 1648.7, 1650];
  const dir = 'RRRRBBRBRBRBRRRBRRRBBRRBRBBRBRRBRRBRRBBBBRBBB';
  vol.forEach((y, i) => p.rect((x(i) - 8.4).toFixed(1), y, x(i) + 8, 1680, dir[i] === 'R' ? RED : BLUE));
  p.line(9, 1681, 936, 1681, '#b86a66', 1);
  p.poly(series(x, 0, [...rep(1677.4, 13), 1676, 1674.6, 1673.4, 1672, 1670.7, 1668.7, 1667.5, 1664, 1663.5, 1663, 1662, 1662, 1662, 1662, 1663, 1663, 1662, 1663, 1663, 1663, 1661, 1659.5, 1656.7, 1654.3, 1654.3, 1654.3, 1654.3, 1656, 1656, 1656, 1654.5, 1654.5]), '#000', 2.6);
  p.poly(series(x, 0, [...rep(1773.3, 12), 1771, 1767.7, 1757, 1759, 1749, 1742.3, 1733.5, 1733.5, 1747, 1745, 1734, 1734, 1732.3, 1734, 1736, 1736.7, 1738.7, 1737, 1737, 1736.7, 1735, 1719, 1726.7, 1715.7, 1703, 1710.7, 1712.7, 1719, 1721.7, 1720.7, 1725, 1730.7, 1730.7]), '#e01410', 3);
  p.poly(series(x, 0, [...rep(1774.3, 13), 1772, 1769.7, 1767, 1763, 1759.4, 1754, 1751.8, 1750, 1749.8, 1746, 1743.5, 1740.7, 1740.5, 1739, 1739, 1739, 1738.5, 1738, 1737, 1736, 1732.7, 1731, 1728, 1723.3, 1721, 1719.4, 1719.4, 1719.4, 1719.4, 1721.7, 1722.7, 1725]), '#111', 1.5);

  [['34,008,46', 36, 110, '#0a08b8'], ['33,400,00', 129.5, 203.8, '#b85cc8'], ['30,575,00', 210.5, 284, '#66669a'], ['30,650,00', 291, 365, '#3c64e0'],
   ['31,925,00', 384, 458, '#e00c08'], ['31,550,00', 465.5, 539.7, '#000'], ['31,150,00', 546, 620.3, '#fff'], ['31,737,50', 627.6, 702, '#d48888'],
   ['31,325,00', 708, 782, '#7fa4d8'], ['30,126,33', 801, 875.3, '#339966'], ['32,700,00', 894, 968.7, '#e00c08'], ['30,100,00', 975.5, 1050.6, '#f0bc30'],
   ['26,650,00', 1056, 1130.3, '#222'], ['24,050,00', 1137, 1211, '#3c64e0']
  ].forEach(([s, a, b, c]) => p.text(a, 894.5, b, s, c));
  [119, 373, 790.5, 883, 1220].forEach(a => p.square(a, 894.5));
  p.rect(1230.5, 879.500, 1308, 897.5, '#cbcbcb');
  p.text(1236, 894.5, 1305, '아이티켐', '#222');
  p.text(1193.6, 912.5, 1226, '0,00', '#8f7f3f');
  p.text(1233.7, 912.5, 1307.5, '34,008,46', '#f4f430');
  p.text(1316.8, 893.5, 1388.5, 'LC:10,27', '#dc1c10');
  p.text(1316.8, 911.5, 1390, 'HC:-6,74', '#2060d0');
  p.text(502.6, 917.500, 726, '최고 33,400 (-6,74%, 14:57)', '#dc1c10');
  p.line(734, 912.7, 748, 912.7, RED);
  p.raw('<path d="M747 905.500v14.500l9-7z" fill="#e8100c"/>');
  p.table(18, 905.500);
  p.square(1207, 1606);
  p.text(1218, 1606, 1259.6, '22,82', '#111');
  p.text(1267, 1606, 1307.5, '19,17', '#111');
  p.square(1093, 1702);
  p.text(1104.4, 1702, 1202, '1,006,410,00', '#e01810');
  p.text(1210, 1702, 1307.5, '1,082,323,98', '#111');
  p.rect(1322, 1171.800, 1409, 1191, '#e01c10');
  p.text(1328, 1187.5, 1378, '31,150', '#fff');
  p.text(1328, 1205.5, 1382, '13,27%', '#dc1c10');
  [['14:30', 198.7, 240], ['14:40', 405.5, 446.5], ['14:50', 612.5, 653.5], ['15:00', 820, 861], ['15:05:00', 1328.4, 1393]].forEach(([s, a, b]) => p.text(a, 1797, b, s, '#4a4e52'));
  p.text(11.6, 1797, 63.4, '09/23', '#4a4e52', 'font-weight="bold"');
  p.flush();
})();
```
